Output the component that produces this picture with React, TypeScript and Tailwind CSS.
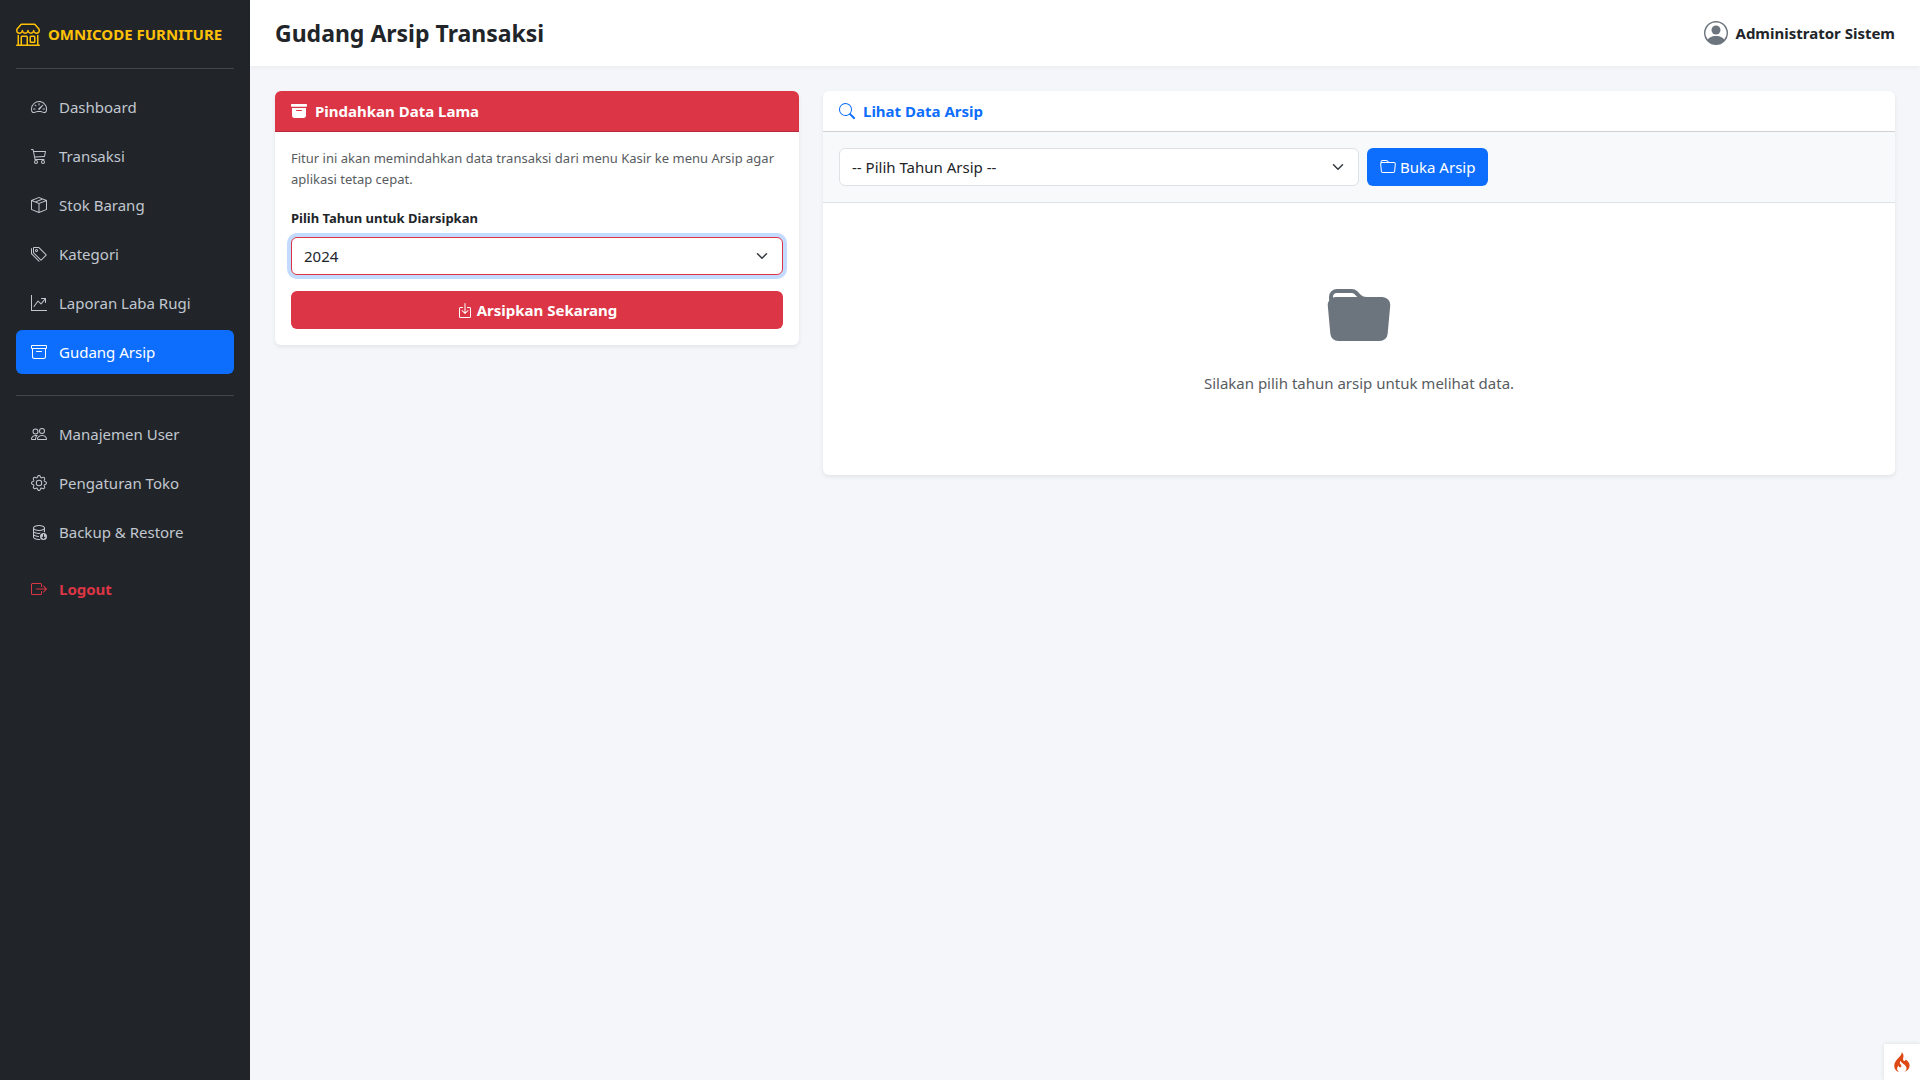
import React, { useState } from 'react';
import {
  BsArchive,
  BsArchiveFill,
  BsBoxArrowInDown,
  BsBoxArrowRight,
  BsBoxSeam,
  BsCart3,
  BsDatabaseDown,
  BsFolder,
  BsFolderFill,
  BsGear,
  BsGraphUpArrow,
  BsPeople,
  BsPersonCircle,
  BsSearch,
  BsShop,
  BsSpeedometer2,
  BsTags,
} from 'react-icons/bs';
import { IconType } from 'react-icons';
import { clsx } from 'clsx';

interface MenuItem {
  label: string;
  icon: IconType;
  active?: boolean;
}

const mainMenu: MenuItem[] = [
  { label: 'Dashboard', icon: BsSpeedometer2 },
  { label: 'Transaksi', icon: BsCart3 },
  { label: 'Stok Barang', icon: BsBoxSeam },
  { label: 'Kategori', icon: BsTags },
  { label: 'Laporan Laba Rugi', icon: BsGraphUpArrow },
  { label: 'Gudang Arsip', icon: BsArchive, active: true },
];

const adminMenu: MenuItem[] = [
  { label: 'Manajemen User', icon: BsPeople },
  { label: 'Pengaturan Toko', icon: BsGear },
  { label: 'Backup & Restore', icon: BsDatabaseDown },
];

const SidebarMenu: React.FC<{ items: MenuItem[] }> = ({ items }) => (
  <ul className="flex flex-col gap-[5px]">
    {items.map(({ label, icon: Icon, active }) => (
      <li key={label}>
        <a
          href="#"
          className={clsx(
            'flex items-center gap-3 rounded-md px-[15px] py-[10px]',
            active ? 'bg-[#0d6efd] text-white' : 'text-[#c2c7d0] hover:bg-[#343a40] hover:text-white'
          )}
        >
          <Icon className="h-4 w-4 shrink-0" />
          <span>{label}</span>
        </a>
      </li>
    ))}
  </ul>
);

const Chevron: React.FC = () => (
  <svg
    viewBox="0 0 16 16"
    className="pointer-events-none absolute top-[13px] right-[15px] h-3 w-3"
    fill="none"
    stroke="#343a40"
    strokeWidth="2"
    strokeLinecap="round"
    strokeLinejoin="round"
  >
    <path d="m2 5 6 6 6-6" />
  </svg>
);

const selectClass = 'h-[38px] w-full appearance-none rounded-md border bg-white pr-9 pl-3 text-[#212529] outline-none';

const App: React.FC = () => {
  const [archiveYear, setArchiveYear] = useState('2024');
  const [viewYear, setViewYear] = useState('');

  return (
    <div className="flex min-h-screen bg-[#f4f6f9] font-['Noto_Sans',sans-serif] text-[15px] leading-6 text-[#212529]">
      {/* Sidebar */}
      <aside className="w-[250px] shrink-0 bg-[#212529] p-4">
        <a href="#" className="flex h-9 items-center gap-2 font-bold text-[#ffc107]">
          <BsShop className="h-6 w-6 shrink-0" />
          <span className="whitespace-nowrap">OMNICODE FURNITURE</span>
        </a>
        <hr className="mt-4 mb-4 border-[#42464a]" />
        <nav>
          <SidebarMenu items={mainMenu} />
          <hr className="mt-[21px] mb-4 border-[#42464a]" />
          <SidebarMenu items={adminMenu} />
          <a href="#" className="mt-[13px] flex items-center gap-3 rounded-md px-[15px] py-[10px] font-bold text-[#dc3545]">
            <BsBoxArrowRight className="h-4 w-4 shrink-0" />
            <span>Logout</span>
          </a>
        </nav>
      </aside>

      <div className="min-w-0 flex-1">
        {/* Header */}
        <header className="flex h-[66px] items-center justify-between bg-white px-[25px] shadow-[0_2px_4px_rgba(0,0,0,0.04)]">
          <h1 className="text-[23px] leading-7 font-bold">Gudang Arsip Transaksi</h1>
          <div className="flex items-center gap-2">
            <BsPersonCircle className="h-6 w-6 text-[#6c757d]" />
            <span className="font-bold">Administrator Sistem</span>
          </div>
        </header>

        <main className="grid grid-cols-3 items-start gap-6 p-[25px]">
          {/* Move old data */}
          <section className="rounded-md bg-white shadow-[0_2px_4px_rgba(0,0,0,0.075)]">
            <h2 className="flex items-center gap-2 rounded-t-md border-b border-[#b52b39] bg-[#dc3545] px-4 py-2 font-bold text-white">
              <BsArchiveFill className="h-4 w-4" />
              <span>Pindahkan Data Lama</span>
            </h2>
            <form className="p-4" onSubmit={(e) => e.preventDefault()}>
              <p className="mb-[18px] text-[13px] leading-[21px] text-[#585c5f]">
                Fitur ini akan memindahkan data transaksi dari menu Kasir ke menu Arsip agar aplikasi tetap cepat.
              </p>
              <label htmlFor="archive-year" className="mb-2 block text-[13px] leading-[21px] font-bold">
                Pilih Tahun untuk Diarsipkan
              </label>
              <div className="relative mb-4">
                <select
                  id="archive-year"
                  value={archiveYear}
                  onChange={(e) => setArchiveYear(e.target.value)}
                  className={clsx(selectClass, 'border-[#dc3545] ring-4 ring-[#c2dbfe]')}
                >
                  <option value="2024">2024</option>
                </select>
                <Chevron />
              </div>
              <button
                type="submit"
                className="flex h-[38px] w-full items-center justify-center gap-1 rounded-md bg-[#dc3545] font-bold text-white hover:bg-[#bb2d3b]"
              >
                <BsBoxArrowInDown className="h-4 w-4" />
                Arsipkan Sekarang
              </button>
            </form>
          </section>

          {/* Archive viewer */}
          <section className="col-span-2 rounded-md bg-white shadow-[0_2px_4px_rgba(0,0,0,0.075)]">
            <h2 className="flex items-center gap-2 border-b border-[#d2d2d2] px-4 py-2 font-bold text-[#0d6efd]">
              <BsSearch className="h-4 w-4" />
              <span>Lihat Data Arsip</span>
            </h2>
            <form
              className="flex gap-2 border-b border-[#dee2e6] bg-[#f8f9fa] p-4"
              onSubmit={(e) => e.preventDefault()}
            >
              <div className="relative w-1/2">
                <select
                  aria-label="Pilih Tahun Arsip"
                  value={viewYear}
                  onChange={(e) => setViewYear(e.target.value)}
                  className={clsx(selectClass, 'border-[#dee2e6]')}
                >
                  <option value="">-- Pilih Tahun Arsip --</option>
                </select>
                <Chevron />
              </div>
              <button
                type="submit"
                className="flex h-[38px] items-center gap-1 rounded-md bg-[#0d6efd] px-[13px] text-white hover:bg-[#0b5ed7]"
              >
                <BsFolder className="h-4 w-4" />
                Buka Arsip
              </button>
            </form>
            <div className="flex flex-col items-center px-4 pt-[82px] pb-20 text-[#6c757d]">
              <BsFolderFill className="h-16 w-16" />
              <p className="mt-[22px] text-[#585c5f]">Silakan pilih tahun arsip untuk melihat data.</p>
            </div>
          </section>
        </main>
      </div>

      {/* Debug toolbar toggle */}
      <button
        type="button"
        aria-label="Toolbar"
        className="fixed right-0 bottom-0 flex h-9 w-9 items-center justify-center bg-white shadow-[0_0_4px_rgba(0,0,0,0.1)]"
      >
        <svg viewBox="0 0 155 200" className="h-5 w-4" fill="#dd4814">
          <path d="M73.7 3.7c2.2 7.9-.7 18.5-7.8 29-1.8 2.6-10.7 12.2-19.7 21.3-23.9 24-33.6 37.1-40.3 54.4-7.9 20.6-7.8 40.8.5 58.2C12.8 180 27.6 193 42.5 198l6 2-3-2.2c-21-15.2-22.9-38.7-4.8-58.8 2.5-2.7 4.8-5 5.1-5 .4 0 .7 2.7.7 6.1 0 5.7.2 6.2 3.7 9.5 3 2.7 4.6 3.4 7.8 3.4 5.6 0 9.9-2.4 11.6-6.5 2.9-6.9 1.6-12-5-20.5-10.5-13.4-11.7-23.3-4.3-34.7l3.1-4.8.7 4.7c1.3 8.2 5.8 12.9 25 25.8 20.9 14.1 30.6 26.1 32.8 40.5 1.1 7.2-.1 16.1-3.1 21.8-2.7 5.3-11.2 14.3-16.5 17.4-2.4 1.4-4.3 2.6-4.3 2.8 0 .2 2.4-.4 5.3-1.4 24.1-8.3 42.7-27.1 48.2-48.6 1.9-7.6 1.9-20.2-.1-28.5-3.5-15.2-14.6-30.5-29.9-41.2l-7-4.9-.6 3.3c-.8 4.8-2.6 7.6-5.9 9.3-4.5 2.3-10.3 1.9-13.8-1-6.7-5.7-7.8-14.6-3.7-30.5 3-11.6 3.2-20.6.5-29.1C88.3 18 80.6 6.3 74.8 2.2 73.1.9 73 1 73.7 3.7z" />
        </svg>
      </button>
    </div>
  );
};

export default App;
